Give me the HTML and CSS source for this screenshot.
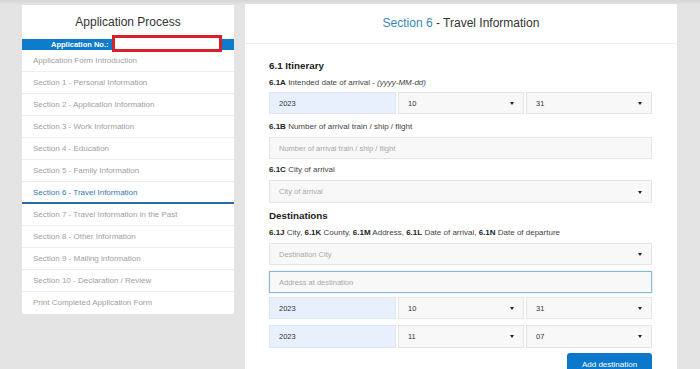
FILE: index.html
```html
<!DOCTYPE html>
<html lang="en">
<head>
    <meta charset="UTF-8">
    <meta name="viewport" content="width=device-width, initial-scale=1.0">
    <title>Application Process</title>
    <link rel="stylesheet" href="styles.css">
</head>
<body>
    <div class="layout">
        <div class="sidebar">
            <h2>Application Process</h2>
            <div class="app-no">
                <span>Application No.:</span>
                <div class="redacted"></div>
            </div>
            <ul class="menu">
                <li>Application Form Introduction</li>
                <li>Section 1 - Personal Information</li>
                <li>Section 2 - Application Information</li>
                <li>Section 3 - Work Information</li>
                <li>Section 4 - Education</li>
                <li>Section 5 - Family Information</li>
                <li class="active">Section 6 - Travel Information</li>
                <li>Section 7 - Travel Information in the Past</li>
                <li>Section 8 - Other Information</li>
                <li>Section 9 - Mailing information</li>
                <li>Section 10 - Declaration / Review</li>
                <li>Print Completed Application Form</li>
            </ul>
        </div>

        <div class="main">
            <div class="main-header">
                <span class="sec">Section 6</span> - Travel Information
            </div>
            <div class="main-body">
                <h3>6.1 Itinerary</h3>
                <p class="label"><b>6.1A</b> Intended date of arrival - <i>(yyyy-MM-dd)</i></p>
                <div class="date-row">
                    <input class="field year" type="text" value="2023">
                    <div class="select"><select class="field"><option>10</option></select></div>
                    <div class="select"><select class="field"><option>31</option></select></div>
                </div>

                <p class="label gap-b"><b>6.1B</b> Number of arrival train / ship / flight</p>
                <input class="field full" type="text" placeholder="Number of arrival train / ship / flight">

                <p class="label gap-c"><b>6.1C</b> City of arrival</p>
                <div class="select tall"><select class="field empty"><option>City of arrival</option></select></div>

                <h3 class="dest-title">Destinations</h3>
                <p class="label gap-c"><b>6.1J</b> City, <b>6.1K</b> County, <b>6.1M</b> Address, <b>6.1L</b> Date of arrival, <b>6.1N</b> Date of departure</p>
                <div class="select dest-city"><select class="field empty"><option>Destination City</option></select></div>
                <input class="field full focused" type="text" placeholder="Address at destination">
                <div class="date-row row-a">
                    <input class="field year" type="text" value="2023">
                    <div class="select"><select class="field"><option>10</option></select></div>
                    <div class="select"><select class="field"><option>31</option></select></div>
                </div>
                <div class="date-row row-b">
                    <input class="field year" type="text" value="2023">
                    <div class="select"><select class="field"><option>11</option></select></div>
                    <div class="select"><select class="field"><option>07</option></select></div>
                </div>
                <div class="actions">
                    <button>Add destination</button>
                </div>
            </div>
        </div>
    </div>
</body>
</html>
```

FILE: styles.css
```css
body {
    font-family: "Liberation Sans", Arial, sans-serif;
    margin: 0;
    padding: 0;
    background: linear-gradient(#d6d6d6, #e4e4e4 5px) #e4e4e4;
    height: 369px;
    overflow: hidden;
}
.layout {
    display: flex;
    align-items: flex-start;
    gap: 11px;
    padding: 4px 23px 0 22px;
}
.sidebar {
    width: 212px;
    background: white;
    margin-top: 1px;
}
.sidebar h2 {
    margin: 0;
    padding: 9px 0;
    font-size: 12px;
    line-height: 16px;
    font-weight: normal;
    text-align: center;
    color: #333;
}
.app-no {
    position: relative;
    height: 11px;
    background: #0f7bcc;
    color: white;
    font-size: 7.5px;
    font-weight: bold;
    line-height: 11px;
    padding-left: 29px;
}
.redacted {
    position: absolute;
    left: 90px;
    top: -4px;
    width: 110px;
    height: 17px;
    box-sizing: border-box;
    border: 3px solid #d6202a;
    background: white;
}
.menu {
    list-style: none;
    margin: 0;
    padding: 0;
}
.menu li {
    height: 21px;
    line-height: 21px;
    border-bottom: 1px solid #eeeeee;
    padding-left: 11px;
    font-size: 8px;
    color: #a0a0a0;
}
.menu li:last-child {
    border-bottom: none;
    height: 22px;
}
.menu li.active {
    height: 20px;
    color: #3679b0;
    border-bottom: 2px solid #2a6ca3;
}
.main {
    width: 432px;
    min-height: 380px;
    background: white;
}
.main-header {
    height: 39px;
    line-height: 38px;
    text-align: center;
    font-size: 12px;
    color: #333;
    border-bottom: 1px solid #eeeeee;
}
.main-header .sec {
    color: #3a86b8;
}
.main-body {
    padding: 16px 25px 0 24px;
}
.main-body h3 {
    margin: 0;
    font-size: 9.8px;
    line-height: 12px;
    color: #222;
}
.label {
    margin: 6px 0 4px;
    font-size: 8px;
    line-height: 10px;
    color: #444;
}
.label b {
    color: #222;
}
.gap-b {
    margin-top: 8px;
    margin-bottom: 5px;
}
.gap-c {
    margin-top: 6px;
    margin-bottom: 5px;
}
.dest-title {
    margin-top: 7px !important;
}
.field {
    display: block;
    width: 100%;
    height: 22px;
    box-sizing: border-box;
    padding: 0 9px;
    margin: 0;
    border: 1px solid #e4e4e4;
    background: #f8f8f8;
    font-family: inherit;
    font-size: 7.5px;
    color: #333;
    border-radius: 0;
    outline: none;
    -webkit-appearance: none;
    appearance: none;
}
.field::placeholder {
    color: #a8a8a8;
}
.field.empty {
    color: #a8a8a8;
}
.field.year {
    background: #e8f0fe;
    border-color: #dfe5ef;
}
.date-row {
    display: grid;
    grid-template-columns: 127px 1fr 1fr;
    gap: 2px;
}
.select {
    position: relative;
}
.select::after {
    content: "";
    position: absolute;
    right: 10px;
    top: 10px;
    border-left: 2.5px solid transparent;
    border-right: 2.5px solid transparent;
    border-top: 3px solid #222;
}
.select.tall .field {
    height: 23px;
}
.select.tall::after {
    top: 11px;
}
.dest-city {
    margin-top: 5px;
}
.focused {
    margin-top: 6px;
    border-color: #8fbad6;
    box-shadow: 0 0 2px rgba(102, 160, 210, 0.4);
}
.row-a {
    margin-top: 4px;
}
.row-b {
    margin-top: 6px;
}
.row-b .field {
    height: 23px;
}
.actions {
    display: flex;
    justify-content: flex-end;
    margin-top: 5px;
}
.actions button {
    width: 85px;
    height: 22px;
    background: #0b78cc;
    color: white;
    border: none;
    border-radius: 3px;
    font-family: inherit;
    font-size: 8px;
    cursor: pointer;
}
```
